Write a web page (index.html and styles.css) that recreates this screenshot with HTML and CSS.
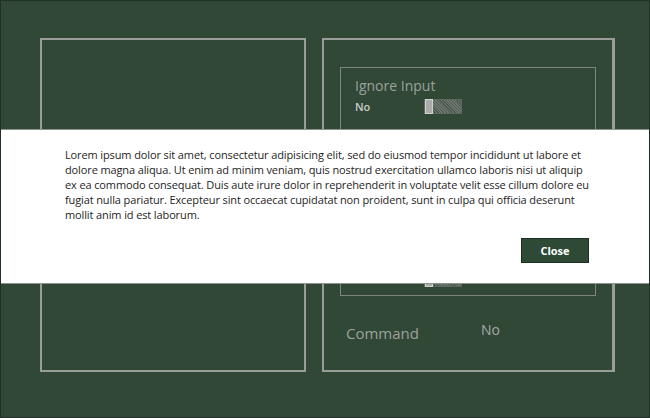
FILE: index.html
```html
<!DOCTYPE html>
<html>
<head>
<meta charset="utf-8">
<link rel="stylesheet" href="styles.css">
</head>
<body>
<div class="page">
  <div class="panel panel-left"></div>
  <div class="panel panel-right">
    <div class="group">
      <div class="group-title">Ignore Input</div>
      <div class="row">
        <span class="val">No</span>
        <span class="toggle"><span class="thumb"></span></span>
      </div>
      <div class="row row-hidden">
        <span class="val val-hidden">No</span>
        <span class="toggle"><span class="thumb"></span></span>
      </div>
    </div>
    <div class="cmd">
      <span class="cmd-label">Command</span>
      <span class="cmd-val">No</span>
    </div>
  </div>
</div>
<div class="dialog">
  <p class="dialog-text">Lorem ipsum dolor sit amet, consectetur adipisicing elit, sed do eiusmod tempor incididunt ut labore et dolore magna aliqua. Ut enim ad minim veniam, quis nostrud exercitation ullamco laboris nisi ut aliquip ex ea commodo consequat. Duis aute irure dolor in reprehenderit in voluptate velit esse cillum dolore eu fugiat nulla pariatur. Excepteur sint occaecat cupidatat non proident, sunt in culpa qui officia deserunt mollit anim id est laborum.</p>
  <div class="dialog-actions">
    <button class="btn">Close</button>
  </div>
</div>
</body>
</html>
```
FILE: styles.css
```css
html, body {
  margin: 0;
  padding: 0;
}
body {
  width: 650px;
  height: 418px;
  background: #314837;
  font-family: "Open Sans", "Noto Sans", sans-serif;
  position: relative;
  overflow: hidden;
  box-sizing: border-box;
  border: 1px solid #223127;
}
.page {
  display: flex;
  gap: 16px;
  padding: 37px 0 0 39px;
}
.panel {
  height: 334px;
  box-sizing: border-box;
  border: 2px solid #9a9d9a;
}
.panel-left {
  width: 266px;
}
.panel-right {
  width: 293px;
  border-right-width: 3px;
  display: flex;
  flex-direction: column;
}
.group {
  margin: 27px 0 0 16px;
  width: 256px;
  height: 229px;
  box-sizing: border-box;
  border: 1px solid #7d857f;
  padding: 8px 0 0 14px;
}
.group-title {
  font-size: 14px;
  color: #9aa39c;
  line-height: 20px;
}
.row {
  display: flex;
  align-items: center;
  height: 18px;
  margin-top: 1px;
}
.row-hidden {
  margin-top: 155px;
}
.val {
  font-size: 11px;
  font-weight: 600;
  color: #c9ccc9;
  width: 69px;
}
.val-hidden {
  visibility: hidden;
}
.toggle {
  width: 38px;
  height: 15px;
  box-sizing: border-box;
  background: repeating-linear-gradient(45deg, #6f7771 0 1px, #4c5a50 1px 2px);
  border: 1px solid #5d6860;
  position: relative;
}
.thumb {
  position: absolute;
  left: 0;
  top: -1px;
  width: 8px;
  height: 15px;
  background: #a9aca9;
  border: 1px solid #d0d2d0;
  box-sizing: border-box;
}
.cmd {
  display: flex;
  align-items: baseline;
  margin: 27px 0 0 22px;
}
.cmd-label {
  font-size: 15px;
  color: #9aa29c;
  width: 135px;
}
.cmd-val {
  font-size: 14px;
  color: #a3aaa5;
  position: relative;
  top: -4px;
}
.dialog {
  position: absolute;
  left: 0;
  top: 128px;
  width: 650px;
  height: 155px;
  background: #ffffff;
  border-top: 1px solid #8d948f;
  border-bottom: 1px solid #8d948f;
  box-sizing: border-box;
  padding: 17px 54px 0 64px;
}
.dialog-text {
  margin: 0;
  font-size: 11px;
  line-height: 15px;
  color: #1e1e1e;
  letter-spacing: -0.12px;
}
.dialog-actions {
  display: flex;
  justify-content: flex-end;
  margin-top: 16px;
  padding-right: 8px;
}
.btn {
  width: 68px;
  height: 25px;
  background: #2e4a37;
  border: 1px solid #1d2e22;
  color: #ffffff;
  font-family: "Open Sans", "Noto Sans", sans-serif;
  font-size: 11px;
  font-weight: 700;
  padding: 0;
}
```
